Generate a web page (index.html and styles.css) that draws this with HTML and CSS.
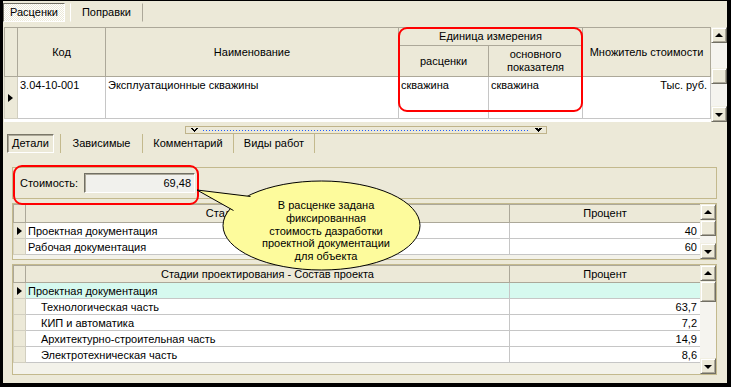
FILE: index.html
```html
<!DOCTYPE html>
<html lang="ru">
<head>
<meta charset="utf-8">
<title>Расценки</title>
<link rel="stylesheet" href="styles.css">
</head>
<body>
<div class="win">
  <div class="toptabs">
    <div class="ttab sel">Расценки</div>
    <div class="ttab">Поправки</div>
  </div>

  <div class="topgrid">
    <div class="gv gv-top">
      <table class="tbl">
        <colgroup><col class="c-ind"><col class="c-code"><col class="c-name"><col class="c-u1"><col class="c-u2"><col class="c-mul"></colgroup>
        <tr class="h-r1">
          <th rowspan="2"></th>
          <th rowspan="2">Код</th>
          <th rowspan="2">Наименование</th>
          <th colspan="2">Единица измерения</th>
          <th rowspan="2">Множитель стоимости</th>
        </tr>
        <tr class="h-r2">
          <th>расценки</th>
          <th>основного<br>показателя</th>
        </tr>
        <tr class="r-tall">
          <td class="ind mid"><span class="mark"></span></td>
          <td>3.04-10-001</td>
          <td>Эксплуатационные скважины</td>
          <td>скважина</td>
          <td>скважина</td>
          <td class="r">Тыс. руб.</td>
        </tr>
      </table>
    </div>
    <div class="vscroll">
      <div class="sbtn up"></div>
      <div class="track gap25"></div>
      <div class="thumb t16"></div>
      <div class="track grow"></div>
      <div class="sbtn down"></div>
    </div>
    <div class="redbox rb-top"></div>
  </div>

  <div class="splitter">
    <span class="chev"></span>
    <span class="dots"></span>
    <span class="chev"></span>
  </div>

  <div class="btabs">
    <div class="btab sel">Детали</div>
    <div class="btab w1">Зависимые</div>
    <div class="btab w2">Комментарий</div>
    <div class="btab w3 last">Виды работ</div>
  </div>

  <div class="group">
    <span class="lbl">Стоимость:</span>
    <span class="field">69,48</span>
    <div class="redbox rb-cost"></div>
  </div>

  <div class="box box-mid">
    <div class="gv">
      <table class="tbl tbl2">
        <colgroup><col class="c-ind2"><col class="c-stage"><col class="c-pct"></colgroup>
        <tr class="h18"><th></th><th>Стадии проектирования</th><th>Процент</th></tr>
        <tr class="r16"><td class="ind"><span class="mark"></span></td><td>Проектная документация</td><td class="r">40</td></tr>
        <tr class="r16"><td class="ind"></td><td>Рабочая документация</td><td class="r">60</td></tr>
      </table>
    </div>
    <div class="vscroll">
      <div class="sbtn up"></div>
      <div class="thumb t16"></div>
      <div class="track grow"></div>
      <div class="sbtn down"></div>
    </div>
  </div>

  <div class="box box-low">
    <div class="gv">
      <table class="tbl tbl2">
        <colgroup><col class="c-ind2"><col class="c-stage"><col class="c-pct"></colgroup>
        <tr class="h17"><th></th><th>Стадии проектирования - Состав проекта</th><th>Процент</th></tr>
        <tr class="r16 hl"><td class="ind"><span class="mark"></span></td><td>Проектная документация</td><td class="r"></td></tr>
        <tr class="r16"><td class="ind"></td><td class="sub">Технологическая часть</td><td class="r">63,7</td></tr>
        <tr class="r16"><td class="ind"></td><td class="sub">КИП и автоматика</td><td class="r">7,2</td></tr>
        <tr class="r16"><td class="ind"></td><td class="sub">Архитектурно-строительная часть</td><td class="r">14,9</td></tr>
        <tr class="r16"><td class="ind"></td><td class="sub">Электротехническая часть</td><td class="r">8,6</td></tr>
      </table>
    </div>
    <div class="vscroll">
      <div class="sbtn up"></div>
      <div class="thumb t21"></div>
      <div class="track grow"></div>
      <div class="sbtn down"></div>
    </div>
  </div>

  <div class="callout">
    <svg class="bubble" width="240" height="100" viewBox="0 0 240 100">
      <ellipse cx="131.5" cy="50.5" rx="98.5" ry="44.5" fill="#fdfb9c" stroke="#000" stroke-width="1"/>
      <polygon points="60,21 7,15 43,35 70,40" fill="#fdfb9c"/>
      <polyline points="60.5,21.5 7,15 43.5,35.5" fill="none" stroke="#000" stroke-width="1"/>
    </svg>
    <div class="ctext">В расценке задана<br>фиксированная<br>стоимость дазработки<br>проектной документации<br>для объекта</div>
  </div>
</div>
</body>
</html>
```

FILE: styles.css
```css
* { box-sizing: border-box; }
html, body { margin: 0; padding: 0; }
body {
  background: #000;
  width: 731px;
  height: 387px;
  overflow: hidden;
  font: 11px "Liberation Sans", Arial, sans-serif;
  color: #000;
}
.win {
  position: relative;
  margin: 1px 4px 0 3px;
  width: 724px;
  height: 382px;
  background: #ece9d8;
  display: flex;
  flex-direction: column;
}

/* top tabs */
.toptabs {
  height: 21px;
  padding-top: 2px;
  display: flex;
  gap: 5px;
}
.ttab {
  height: 19px;
  line-height: 17px;
  padding: 0 11px;
  border: 1px solid transparent;
  border-left-color: #fff;
  border-right-color: #aca899;
}
.ttab.sel {
  padding: 0 6px;
  border-color: #716f64 #fff #fff #716f64;
  background: repeating-conic-gradient(#fff 0 25%, #ece9d8 0 50%) 0 0 / 2px 2px;
}

/* generic grid */
.topgrid {
  position: relative;
  margin: 5px 0 0 1px;
  height: 95px;
  display: flex;
}
.gv {
  flex: 1;
  overflow: hidden;
  background: #f3f2ea;
}
.gv-top { background: #fff; }
.tbl {
  border-collapse: collapse;
  table-layout: fixed;
  width: 100%;
}
.tbl th {
  background: #ece9d8;
  font-weight: normal;
  border: 1px solid #aca899;
  text-align: center;
  vertical-align: middle;
  padding: 0 2px;
  line-height: 13px;
  white-space: nowrap;
  overflow: hidden;
}
.tbl td {
  background: #fff;
  border: 1px solid #c6c6c6;
  vertical-align: top;
  padding: 1px 3px 0 2px;
  line-height: 14px;
  white-space: nowrap;
  overflow: hidden;
}
.tbl td.ind {
  background: #ece9d8;
  border-color: #d2cfc0;
  padding: 0 0 0 3px;
  vertical-align: middle;
}
.tbl td.r { text-align: right; }
.tbl td.sub { padding-left: 15px; }
.tbl tr.hl td:not(.ind) { background: #d6f9ef; }

.c-ind { width: 13px; }
.c-code { width: 88px; }
.c-name { width: 293px; }
.c-u1 { width: 90px; }
.c-u2 { width: 94px; }
.c-mul { width: 128px; }
.h-r1 th { height: 18px; }
.h-r2 th { height: 31px; }
.r-tall td { height: 42px; padding-top: 1px; }
.tbl td.mid { vertical-align: middle; }

.c-ind2 { width: 12px; }
.c-stage { width: 484px; }
.c-pct { width: 191px; }
.h18 th { height: 18px; }
.h17 th { height: 17px; }
.r16 td { height: 16px; }

.mark {
  display: block;
  width: 0;
  height: 0;
  border-left: 5px solid #000;
  border-top: 4px solid transparent;
  border-bottom: 4px solid transparent;
}

/* scrollbars */
.vscroll {
  width: 16px;
  display: flex;
  flex-direction: column;
  background: #f5f4ef;
}
.sbtn, .thumb {
  width: 16px;
  flex: none;
  background: #ece9d8;
  border: 1px solid;
  border-color: #f1efe2 #716f64 #716f64 #f1efe2;
  box-shadow: inset 1px 1px #fff, inset -1px -1px #aca899;
}
.sbtn {
  height: 16px;
  display: flex;
  align-items: center;
  justify-content: center;
}
.sbtn::after {
  content: "";
  width: 0;
  height: 0;
  border-left: 4px solid transparent;
  border-right: 4px solid transparent;
}
.sbtn.up::after { border-bottom: 4px solid #000; margin-top: -1px; }
.sbtn.down::after { border-top: 4px solid #000; margin-top: 1px; }
.thumb.t16 { height: 16px; }
.thumb.t21 { height: 21px; }
.track.gap25 { height: 25px; flex: none; }
.track.grow { flex: 1; }

/* annotations */
.redbox {
  position: absolute;
  border: 2px solid #f00;
  border-radius: 9px;
  pointer-events: none;
}
.rb-top { left: 394px; top: 0; width: 185px; height: 85px; }
.rb-cost { left: 0; top: -3px; width: 186px; height: 40px; }

/* splitter */
.splitter {
  margin: 4px 0 0 182px;
  width: 362px;
  height: 8px;
  border: 1px solid #bfb38a;
  display: flex;
  align-items: center;
  padding: 0 4px 0 5px;
  gap: 3px;
}
.chev {
  width: 7px;
  height: 4px;
  flex: none;
  background:
    linear-gradient(45deg, transparent 45%, #000 45% 75%, transparent 75%) left / 4px 4px no-repeat,
    linear-gradient(-45deg, transparent 45%, #000 45% 75%, transparent 75%) right / 4px 4px no-repeat;
}
.dots {
  flex: 1;
  height: 1px;
  margin: 0 2px;
  background: repeating-linear-gradient(90deg, #1d5cff 0 1px, transparent 1px 3px);
}

/* bottom tabs */
.btabs {
  margin-left: 4px;
  height: 20px;
  display: flex;
}
.btab {
  height: 19px;
  line-height: 18px;
  text-align: center;
  border-left: 1px solid #c3b98d;
}
.btab.sel {
  width: 47px;
  border: 1px solid;
  border-color: #7a7768 #fff #fff #7a7768;
  box-shadow: inset 1px 1px #aca899;
  margin-right: 6px;
  line-height: 17px;
}
.btab.w1 { width: 82px; }
.btab.w2 { width: 91px; }
.btab.w3 { width: 82px; border-right: 1px solid #c3b98d; }

/* cost group */
.group {
  position: relative;
  margin: 13px 0 0 9px;
  width: 705px;
  height: 32px;
  border: 1px solid #c3b98d;
  display: grid;
  grid-template-columns: 64px 111px;
  align-items: center;
  padding-left: 7px;
}
.field {
  height: 20px;
  line-height: 18px;
  text-align: right;
  padding-right: 3px;
  background: #f1f1ed;
  border: 1px solid;
  border-color: #716f64 #fff #fff #716f64;
  box-shadow: inset 1px 1px #aca899;
}

/* lower grids */
.box {
  margin: 4px 0 0 9px;
  width: 705px;
  border: 1px solid #c3b98d;
  display: flex;
}
.box-mid { height: 57px; }
.box-low { height: 111px; }

/* callout */
.callout {
  position: absolute;
  left: 187px;
  top: 174px;
  width: 240px;
  height: 100px;
}
.bubble { display: block; }
.ctext {
  position: absolute;
  left: 53px;
  top: 24px;
  width: 166px;
  text-align: center;
  line-height: 12.8px;
  font-size: 11px;
}
```
